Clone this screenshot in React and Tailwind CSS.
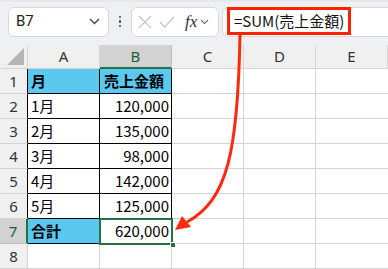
const COLS = ['A', 'B', 'C', 'D', 'E']

const rows = [
  ['月', '売上金額'],
  ['1月', '120,000'],
  ['2月', '135,000'],
  ['3月', '98,000'],
  ['4月', '142,000'],
  ['5月', '125,000'],
  ['合計', '620,000'],
  ['', ''],
]

const jp = { fontFamily: '"Noto Sans CJK JP", "Noto Sans", sans-serif' }

function FormulaBar() {
  return (
    <div className="flex h-[45px] items-center border-t-2 border-[#e6e8eb] bg-[#eef0f3] pb-[4px] pl-2">
      <div className="flex h-[30px] w-[101px] items-center justify-between rounded-md border border-[#d8d8d8] bg-white pl-[7px] pr-2">
        <span className="text-[15px] text-[#222]" style={{ fontFamily: 'Roboto, sans-serif' }}>B7</span>
        <svg width="11" height="7" viewBox="0 0 11 7" fill="none" stroke="#444" strokeWidth="1.4">
          <path d="M1 1l4.5 4.5L10 1" />
        </svg>
      </div>
      <div className="flex w-[22px] flex-col items-center gap-[2px]">
        <span className="h-[2.5px] w-[2.5px] rounded-full bg-[#444]" />
        <span className="h-[2.5px] w-[2.5px] rounded-full bg-[#444]" />
        <span className="h-[2.5px] w-[2.5px] rounded-full bg-[#444]" />
      </div>
      <div className="flex h-[30px] w-[88px] items-center rounded-md border border-[#d8d8d8] bg-white pl-[6px]">
        <svg width="14" height="14" viewBox="0 0 14 14" stroke="#c4c4c4" strokeWidth="1.2">
          <path d="M1 1l12 12M13 1L1 13" />
        </svg>
        <svg className="ml-[7px]" width="16" height="12" viewBox="0 0 16 12" fill="none" stroke="#c4c4c4" strokeWidth="1.2">
          <path d="M1 6l4.5 5L15 1" />
        </svg>
        <span className="ml-[10px] text-[17px] italic leading-none text-[#333]" style={{ fontFamily: '"Liberation Serif", serif' }}>
          fx
        </span>
        <svg className="ml-[3px]" width="9" height="6" viewBox="0 0 9 6" fill="none" stroke="#777" strokeWidth="1.1">
          <path d="M1 1l3.5 3.5L8 1" />
        </svg>
      </div>
      <div className="ml-[3px] flex h-[30px] flex-1 items-center rounded-l-md border border-r-0 border-[#d8d8d8] bg-white pl-[4px]">
        <div className="-mt-[1px] flex h-[28px] items-center border-[3px] border-[#ff2200] px-[4px]">
          <span className="text-[15px] text-[#111]" style={jp}>=SUM(売上金額)</span>
        </div>
      </div>
    </div>
  )
}

function Sheet() {
  return (
    <div className="grid grid-cols-[28px_72px_72px_72px_72px_72px] bg-white" style={jp}>
      <div className="relative h-[24px] border-r border-b border-[#d4d4d4] bg-[#f0f0f0]">
        <svg className="absolute right-[3px] bottom-[3px]" width="17" height="17" viewBox="0 0 17 17">
          <path d="M17 0V17H0Z" fill="#b5b5b5" />
        </svg>
      </div>
      {COLS.map((c) => (
        <div
          key={c}
          className={
            c === 'B'
              ? 'flex h-[24px] items-center justify-center border-r border-b-2 border-r-[#c0c0c0] border-b-[#217346] bg-[#d2d2d2] text-[15px] text-[#17603a]'
              : 'flex h-[24px] items-center justify-center border-r border-b border-[#d4d4d4] bg-[#f0f0f0] text-[15px] text-[#333]'
          }
          style={{ fontFamily: '"Noto Sans", sans-serif' }}
        >
          {c}
        </div>
      ))}
      {rows.map((r, i) => {
        const n = i + 1
        const inTable = n <= 7
        const blue = n === 1 || n === 7
        const sel = n === 7
        return [
          <div
            key={`h${n}`}
            className={
              sel
                ? 'flex h-[25px] items-center justify-center border-r-2 border-b border-r-[#217346] border-b-[#c0c0c0] bg-[#d2d2d2] text-[15px] text-[#17603a]'
                : inTable
                  ? 'flex h-[25px] items-center justify-center border-r border-b border-r-black border-b-[#d4d4d4] bg-[#f0f0f0] text-[15px] text-[#333]'
                  : 'flex h-[25px] items-center justify-center border-r border-b border-[#d4d4d4] bg-[#f0f0f0] text-[15px] text-[#333]'
            }
            style={{ fontFamily: '"Noto Sans", sans-serif' }}
          >
            {n}
          </div>,
          <div
            key={`a${n}`}
            className={
              inTable
                ? `flex h-[25px] items-center border-r border-b border-black pl-[3px] text-[15px] text-black ${blue ? 'bg-[#5bc8f0] font-bold' : ''}`
                : 'h-[25px] border-r border-b border-[#d4d4d4]'
            }
          >
            {r[0]}
          </div>,
          <div
            key={`b${n}`}
            className={
              inTable
                ? `flex h-[25px] items-center border-r border-b border-black px-[2px] text-[15px] text-black ${
                    n === 1 ? 'bg-[#5bc8f0] font-bold justify-start pl-[4px]' : 'justify-end'
                  }`
                : 'h-[25px] border-r border-b border-[#d4d4d4]'
            }
          >
            {r[1]}
          </div>,
          <div key={`c${n}`} className="h-[25px] border-r border-b border-[#d4d4d4]" />,
          <div key={`d${n}`} className="h-[25px] border-r border-b border-[#d4d4d4]" />,
          <div key={`e${n}`} className="h-[25px] border-b border-[#d4d4d4]" />,
        ]
      })}
    </div>
  )
}

export default function App() {
  return (
    <div className="relative h-[269px] w-[388px] overflow-hidden bg-white">
      <FormulaBar />
      <Sheet />
      {/* selection on B7 */}
      <div className="pointer-events-none absolute left-[99px] top-[218px] h-[27px] w-[74px] border-2 border-[#217346]" />
      <div className="absolute left-[170px] top-[242px] h-[6px] w-[6px] border border-white bg-[#217346]" />
      <svg className="pointer-events-none absolute left-0 top-0" width="388" height="269" viewBox="0 0 388 269">
        <path d="M240 34 C238 150, 228 200, 187 222" fill="none" stroke="#ff2a0c" strokeWidth="3" />
        <path d="M175 230 L191 227 L182 216 Z" fill="#ff2a0c" />
      </svg>
    </div>
  )
}
